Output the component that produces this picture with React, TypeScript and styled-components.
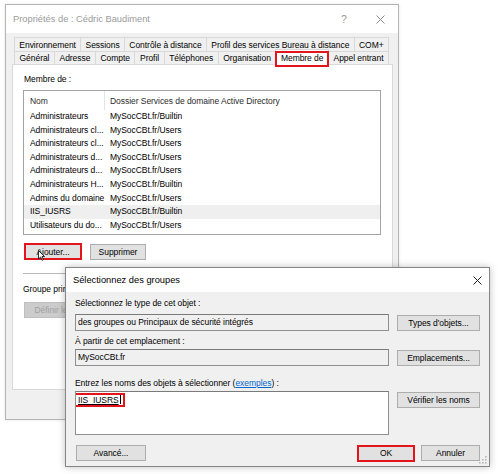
import React from "react";
import styled, { createGlobalStyle, css } from "styled-components";

const GlobalStyle = createGlobalStyle`
    html, body {
        margin: 0;
        padding: 0;
        background: #fff;
    }
    body {
        font-family: "Liberation Sans", Arial, sans-serif;
        font-size: 8.5px;
        letter-spacing: -0.05px;
        color: #000;
    }
`;

const RED = "#e3141c";

const Desktop = styled.div`
    position: relative;
    width: 500px;
    height: 474px;
    overflow: hidden;
    background: #fff;
`;

const Window = styled.section<{
    $left: number;
    $top: number;
    $width: number;
    $height: number;
    $active?: boolean;
}>`
    position: absolute;
    left: ${(p) => p.$left}px;
    top: ${(p) => p.$top}px;
    width: ${(p) => p.$width}px;
    height: ${(p) => p.$height}px;
    box-sizing: border-box;
    display: flex;
    flex-direction: column;
    background: #f0f0f0;
    border: 1px solid ${(p) => (p.$active ? "#858585" : "#b4b4b4")};
    box-shadow: ${(p) =>
        p.$active ? "0 0 7px rgba(0, 0, 0, 0.25)" : "0 0 3px rgba(0, 0, 0, 0.1)"};
`;

const TitleBar = styled.header<{ $height: number }>`
    flex: 0 0 ${(p) => p.$height}px;
    display: flex;
    align-items: stretch;
    background: #fff;
`;

const Title = styled.span<{ $active?: boolean }>`
    flex: 1;
    display: flex;
    align-items: center;
    padding-left: 7px;
    font-size: 9.3px;
    letter-spacing: 0;
    color: ${(p) => (p.$active ? "#000" : "#9a9a9a")};
`;

const CaptionButton = styled.span<{ $width: number; $color: string }>`
    width: ${(p) => p.$width}px;
    display: flex;
    align-items: center;
    justify-content: center;
    color: ${(p) => p.$color};
    font-size: 10.5px;
`;

const CloseGlyph: React.FC<{ color: string }> = ({ color }) => (
    <svg width="9" height="9" viewBox="0 0 9 9">
        <path d="M0.5 0.5 L8.5 8.5 M8.5 0.5 L0.5 8.5" stroke={color} strokeWidth="1" />
    </svg>
);

/* ---------- outer properties window ---------- */

const OuterBody = styled.div`
    flex: 1;
    display: flex;
    flex-direction: column;
    padding: 4px 5px 0 6px;
`;

const TabStrip = styled.div`
    display: flex;
    flex-direction: column;
    margin: 0 4px 0 2px;
`;

const TabRow = styled.div<{ $height: number }>`
    display: flex;
    height: ${(p) => p.$height}px;
`;

const Tab = styled.div<{ $selected?: boolean }>`
    flex: 1 1 auto;
    box-sizing: border-box;
    height: 100%;
    margin-left: -1px;
    padding: 0 3px;
    display: flex;
    align-items: center;
    justify-content: center;
    white-space: nowrap;
    background: #f0f0f0;
    border: 1px solid #d9d9d9;
    border-bottom: none;

    &:first-child {
        margin-left: 0;
    }

    ${(p) =>
        p.$selected &&
        css`
            position: relative;
            z-index: 1;
            height: calc(100% + 3px);
            margin-top: -2px;
            margin-bottom: -1px;
            background: #fff;

            &::after {
                content: "";
                position: absolute;
                left: -1px;
                right: -1px;
                top: 1px;
                bottom: -2px;
                border: 2px solid ${RED};
            }
        `}
`;

const TabPanel = styled.div`
    height: 326px;
    box-sizing: border-box;
    display: flex;
    flex-direction: column;
    align-items: flex-start;
    padding: 8px 11px 0 10px;
    background: #fff;
    border: 1px solid #d9d9d9;
`;

const Label = styled.div<{ $mt?: number; $indent?: number }>`
    line-height: 13px;
    margin-top: ${(p) => p.$mt ?? 0}px;
    margin-left: ${(p) => p.$indent ?? 0}px;
    white-space: nowrap;
`;

const ListView = styled.div`
    width: 358px;
    height: 145px;
    margin-top: 4px;
    box-sizing: border-box;
    border: 1px solid #a3a3a3;
    background: #fff;
    overflow: hidden;
`;

const ListHeader = styled.div`
    display: flex;
    height: 19px;
    color: #2b2b2b;
`;

const HeaderCell = styled.div<{ $first?: boolean }>`
    display: flex;
    align-items: center;
    box-sizing: border-box;
    white-space: nowrap;
    ${(p) =>
        p.$first
            ? css`
                  width: 81px;
                  padding-left: 6px;
                  border-right: 1px solid #e5e5e5;
              `
            : css`
                  flex: 1;
                  padding-left: 5px;
              `}
`;

const ListRow = styled.div<{ $selected?: boolean }>`
    display: flex;
    height: 13.6px;
    line-height: 13.6px;
    background: ${(p) => (p.$selected ? "#efefef" : "transparent")};
`;

const Cell = styled.div<{ $first?: boolean }>`
    box-sizing: border-box;
    white-space: nowrap;
    overflow: hidden;
    ${(p) =>
        p.$first
            ? css`
                  width: 81px;
                  padding-left: 6px;
              `
            : css`
                  flex: 1;
                  padding-left: 5px;
              `}
`;

const ButtonRow = styled.div<{ $mt: number }>`
    position: relative;
    display: flex;
    align-items: center;
    gap: 8px;
    margin-top: ${(p) => p.$mt}px;
    margin-left: 1px;
`;

const Button = styled.button<{ $width: number; $marked?: boolean }>`
    box-sizing: border-box;
    width: ${(p) => p.$width}px;
    height: 16px;
    padding: 0;
    font: inherit;
    letter-spacing: inherit;
    color: #000;
    background: #e1e1e1;
    border: 1px solid #adadad;
    white-space: nowrap;
    overflow: hidden;

    ${(p) =>
        p.$marked &&
        css`
            height: 17px;
            border: 2px solid ${RED};
        `}

    &:disabled {
        color: #a0a0a0;
        background: #cccccc;
        border-color: #bfbfbf;
    }
`;

const Separator = styled.div`
    width: 358px;
    height: 1px;
    margin-top: 13px;
    background: #b9b9b9;
`;

const OuterFooter = styled.div`
    display: flex;
    justify-content: flex-end;
    gap: 6px;
    margin-top: 7px;
`;

const Pointer = styled.svg`
    position: absolute;
    left: 14px;
    top: 7px;
`;

/* ---------- "Sélectionnez des groupes" dialog ---------- */

const DialogBody = styled.div`
    position: relative;
    flex: 1;
    display: flex;
    flex-direction: column;
    padding: 0 9px;
`;

const FieldRow = styled.div<{ $mt: number }>`
    display: grid;
    grid-template-columns: 314px 83px;
    column-gap: 8px;
    align-items: start;
    margin-top: ${(p) => p.$mt}px;
`;

const TextBox = styled.div<{ $readOnly?: boolean; $height?: number }>`
    box-sizing: border-box;
    height: ${(p) => p.$height ?? 17}px;
    padding: 0 2px;
    line-height: 15px;
    white-space: nowrap;
    overflow: hidden;
    background: ${(p) => (p.$readOnly ? "#f0f0f0" : "#fff")};
    border: 1px solid #8f8f8f;
    border-top-color: #7a7a7a;
`;

const SideButton = styled(Button)`
    margin-top: 1px;
`;

const Link = styled.span`
    color: #0066cc;
    text-decoration: underline;
`;

const ResolvedName = styled.span`
    display: inline-block;
    margin: 1px 0 0 -4px;
    padding: 0 2px;
    line-height: 10px;
    border: 2px solid ${RED};
    text-decoration: underline;
`;

const Caret = styled.span`
    display: inline-block;
    width: 1px;
    height: 9px;
    margin-left: 1px;
    vertical-align: -1px;
    background: #000;
`;

const DialogFooter = styled.div`
    display: flex;
    align-items: center;
    gap: 6px;
    margin-top: 10px;
    margin-left: 1px;
`;

const Spacer = styled.div`
    flex: 1;
`;

const Grip = styled.svg`
    position: absolute;
    right: 2px;
    bottom: 2px;
`;

const tabsTop = [
    "Environnement",
    "Sessions",
    "Contrôle à distance",
    "Profil des services Bureau à distance",
    "COM+",
];

const tabsBottom = [
    "Général",
    "Adresse",
    "Compte",
    "Profil",
    "Téléphones",
    "Organisation",
    "Membre de",
    "Appel entrant",
];

const groups: [string, string][] = [
    ["Administrateurs", "MySocCBt.fr/Builtin"],
    ["Administrateurs cl...", "MySocCBt.fr/Users"],
    ["Administrateurs cl...", "MySocCBt.fr/Users"],
    ["Administrateurs d...", "MySocCBt.fr/Users"],
    ["Administrateurs d...", "MySocCBt.fr/Users"],
    ["Administrateurs H...", "MySocCBt.fr/Builtin"],
    ["Admins du domaine", "MySocCBt.fr/Users"],
    ["IIS_IUSRS", "MySocCBt.fr/Builtin"],
    ["Utilisateurs du do...", "MySocCBt.fr/Users"],
];

const PropertiesWindow: React.FC = () => (
    <Window $left={5} $top={4} $width={394} $height={416}>
        <TitleBar $height={28}>
            <Title>Propriétés de : Cédric Baudiment</Title>
            <CaptionButton $width={36} $color="#9a9a9a">?</CaptionButton>
            <CaptionButton $width={36} $color="#9a9a9a">
                <CloseGlyph color="#8a8a8a" />
            </CaptionButton>
        </TitleBar>
        <OuterBody>
            <TabStrip>
                <TabRow $height={14}>
                    {tabsTop.map((t) => (
                        <Tab key={t}>{t}</Tab>
                    ))}
                </TabRow>
                <TabRow $height={13}>
                    {tabsBottom.map((t) => (
                        <Tab key={t} $selected={t === "Membre de"}>
                            {t}
                        </Tab>
                    ))}
                </TabRow>
            </TabStrip>
            <TabPanel>
                <Label $indent={1}>Membre de :</Label>
                <ListView>
                    <ListHeader>
                        <HeaderCell $first>Nom</HeaderCell>
                        <HeaderCell>Dossier Services de domaine Active Directory</HeaderCell>
                    </ListHeader>
                    {groups.map(([name, folder], i) => (
                        <ListRow key={i} $selected={name === "IIS_IUSRS"}>
                            <Cell $first>{name}</Cell>
                            <Cell>{folder}</Cell>
                        </ListRow>
                    ))}
                </ListView>
                <ButtonRow $mt={8}>
                    <Button $width={58} $marked>
                        Ajouter...
                    </Button>
                    <Button $width={56}>Supprimer</Button>
                    <Pointer width="7" height="11" viewBox="0 0 7 11">
                        <path
                            d="M0.5 0.5 L0.5 9 L2.6 7 L4 10.3 L5.3 9.7 L4 6.6 L6.6 6.6 Z"
                            fill="#fff"
                            stroke="#000"
                            strokeWidth="0.8"
                        />
                    </Pointer>
                </ButtonRow>
                <Separator />
                <Label $mt={9}>Groupe principal :   Utilisateurs du domaine</Label>
                <ButtonRow $mt={6}>
                    <Button $width={116} disabled>
                        Définir le groupe principal
                    </Button>
                </ButtonRow>
            </TabPanel>
            <OuterFooter>
                <Button $width={57}>OK</Button>
                <Button $width={57}>Annuler</Button>
                <Button $width={57}>Appliquer</Button>
                <Button $width={57}>Aide</Button>
            </OuterFooter>
        </OuterBody>
    </Window>
);

const SelectGroupsDialog: React.FC = () => (
    <Window $left={65} $top={267} $width={425} $height={200} $active>
        <TitleBar $height={24}>
            <Title $active>Sélectionnez des groupes</Title>
            <CaptionButton $width={24} $color="#222">
                <CloseGlyph color="#222" />
            </CaptionButton>
        </TitleBar>
        <DialogBody>
            <Label $mt={5}>Sélectionnez le type de cet objet :</Label>
            <FieldRow $mt={4}>
                <TextBox $readOnly>des groupes ou Principaux de sécurité intégrés</TextBox>
                <SideButton $width={83}>Types d'objets...</SideButton>
            </FieldRow>
            <Label $mt={3.5}>À partir de cet emplacement :</Label>
            <FieldRow $mt={1.5}>
                <TextBox $readOnly>MySocCBt.fr</TextBox>
                <SideButton $width={83}>Emplacements...</SideButton>
            </FieldRow>
            <Label $mt={10.5}>
                Entrez les noms des objets à sélectionner (<Link>exemples</Link>) :
            </Label>
            <FieldRow $mt={1}>
                <TextBox $height={44}>
                    <ResolvedName>
                        IIS_IUSRS
                        <Caret />
                    </ResolvedName>
                </TextBox>
                <SideButton $width={83}>Vérifier les noms</SideButton>
            </FieldRow>
            <DialogFooter>
                <Button $width={70}>Avancé...</Button>
                <Spacer />
                <Button $width={58} $marked>
                    OK
                </Button>
                <Button $width={59}>Annuler</Button>
            </DialogFooter>
            <Grip width="8" height="8" viewBox="0 0 8 8">
                {[
                    [6, 0],
                    [6, 3],
                    [3, 3],
                    [6, 6],
                    [3, 6],
                    [0, 6],
                ].map(([x, y]) => (
                    <rect key={`${x}-${y}`} x={x} y={y} width="1.6" height="1.6" fill="#b8b8b8" />
                ))}
            </Grip>
        </DialogBody>
    </Window>
);

export default function App() {
    return (
        <>
            <GlobalStyle />
            <Desktop>
                <PropertiesWindow />
                <SelectGroupsDialog />
            </Desktop>
        </>
    );
}
